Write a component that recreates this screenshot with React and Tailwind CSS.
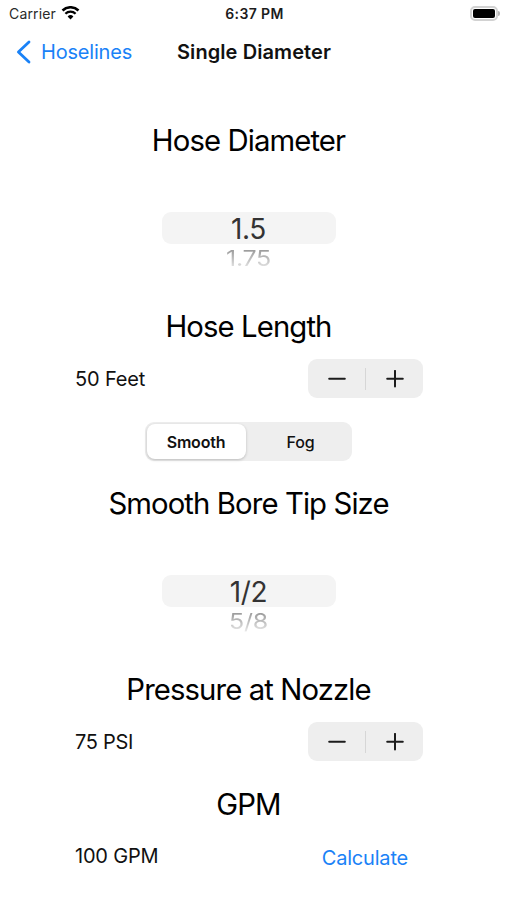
import React, { useState } from 'react';

const DIAMETERS = ['1.5', '1.75', '2.5'];
const TIP_SIZES = ['1/2', '5/8', '3/4'];

const StatusBar = () => (
  <div className="flex h-7 items-center justify-between pl-[9px] pr-[7px] text-[14px] leading-none">
    <div className="flex flex-1 items-center gap-[5px]">
      <span className="tracking-[0.15px] text-[#2a2a2a]">Carrier</span>
      <svg width="19" height="14" viewBox="0 0 18 14" fill="none" stroke="#000" className="mb-[2px]">
        <path d="M1 4.5 A11.4 11.4 0 0 1 17 4.5" strokeWidth="2.5" />
        <path d="M3.9 7.8 A7.3 7.3 0 0 1 14.1 7.8" strokeWidth="2.3" />
        <path d="M9 13.4 L6.1 10.4 A4.2 4.2 0 0 1 11.9 10.4 Z" fill="#000" stroke="none" />
      </svg>
    </div>
    <span className="font-semibold tracking-[0.4px] text-[#1c1c1c]">6:37 PM</span>
    <div className="flex flex-1 items-center justify-end pb-[2px]">
      <div className="h-[15px] w-[28px] rounded-[5px] border-2 border-[#d2d2d2] p-px">
        <div className="h-full w-full rounded-[2px] bg-black"></div>
      </div>
      <div className="h-[5px] w-[2px] rounded-r-full bg-[#b5b5b5]"></div>
    </div>
  </div>
);

const NavBar = () => (
  <div className="flex h-[50px] items-center pb-[2px] pl-4 text-[20px]">
    <button className="flex items-center gap-[9px] text-[#1a82f7]">
      <svg width="16" height="24" viewBox="0 0 16 24" fill="none" stroke="currentColor" strokeWidth="2.8" strokeLinecap="round" strokeLinejoin="round">
        <path d="M13 2 L2.4 12 L13 22" />
      </svg>
      <span className="tracking-[-0.2px]">Hoselines</span>
    </button>
    <h1 className="ml-[45px] font-semibold tracking-[0.08px] text-[#111]">Single Diameter</h1>
  </div>
);

const Heading = ({ children }) => (
  <h2 className="h-10 pt-px text-center text-[29.3px] leading-10 tracking-[-0.9px] text-black">{children}</h2>
);

const WheelPicker = ({ options }) => {
  const [selected, setSelected] = useState(0);
  const next = options[selected + 1];

  return (
    <div className="flex h-[146px] flex-col items-center pt-[52px]">
      <div className="flex h-8 w-[174px] items-center justify-center rounded-[9px] bg-[#f4f4f4] pt-px text-[28px] leading-none tracking-[-0.3px] text-[#333]">
        {options[selected]}
      </div>
      {next && (
        <button
          onClick={() => setSelected(selected + 1)}
          className="h-[28px] origin-center scale-y-[0.85] bg-linear-to-b from-[#8c8c8c] to-[#eeeeee] bg-clip-text text-[25px] leading-[28px] tracking-[-0.3px] text-transparent"
        >
          {next}
        </button>
      )}
    </div>
  );
};

const Stepper = ({ onDecrement, onIncrement }) => (
  <div className="flex h-[39px] w-[115px] items-center rounded-[9px] bg-[#eeeeee] text-[#1c1c1c]">
    <button onClick={onDecrement} className="flex flex-1 justify-center">
      <svg width="18" height="18" viewBox="0 0 18 18" stroke="currentColor" strokeWidth="2" strokeLinecap="round">
        <path d="M1.2 8.7 H16.8" />
      </svg>
    </button>
    <div className="h-[22px] w-px bg-[#d6d6d6]"></div>
    <button onClick={onIncrement} className="flex flex-1 justify-center">
      <svg width="18" height="18" viewBox="0 0 18 18" stroke="currentColor" strokeWidth="2" strokeLinecap="round">
        <path d="M1.2 8.7 H16.8 M9 0.9 V16.5" />
      </svg>
    </button>
  </div>
);

const App = () => {
  const [length, setLength] = useState(50);
  const [pressure, setPressure] = useState(75);
  const [nozzle, setNozzle] = useState('Smooth');
  const [gpm, setGpm] = useState(100);

  return (
    <div className="h-[900px] w-full overflow-hidden bg-white font-['Inter',sans-serif]">
      <StatusBar />
      <NavBar />

      <div className="ml-[74px] w-[349px] pt-[42px] text-[20px] text-[#111]">
        <Heading>Hose Diameter</Heading>
        <WheelPicker options={DIAMETERS} />

        {/* Hose length */}
        <Heading>Hose Length</Heading>
        <div className="mt-[13px] flex items-center justify-between">
          <span className="pl-px tracking-[-0.15px]">{length} Feet</span>
          <Stepper
            onDecrement={() => setLength(Math.max(0, length - 50))}
            onIncrement={() => setLength(length + 50)}
          />
        </div>

        {/* Nozzle type */}
        <div className="mx-auto mt-6 flex h-[39px] w-[207px] rounded-[9px] bg-[#eeeeee] p-[2px] text-[16px]">
          {['Smooth', 'Fog'].map((type) => (
            <button
              key={type}
              onClick={() => setNozzle(type)}
              className={
                nozzle === type
                  ? 'w-[99px] rounded-[8px] bg-white pr-px font-semibold tracking-[-0.2px] shadow-[0_1px_3px_rgba(0,0,0,0.22)]'
                  : 'flex-1 pl-[5px] font-medium tracking-[-0.2px]'
              }
            >
              {type}
            </button>
          ))}
        </div>

        <div className="mt-[22px]">
          <Heading>Smooth Bore Tip Size</Heading>
          <WheelPicker options={TIP_SIZES} />
        </div>

        {/* Nozzle pressure */}
        <Heading>Pressure at Nozzle</Heading>
        <div className="mt-[13px] flex items-center justify-between">
          <span className="pl-px tracking-[-0.3px]">{pressure} PSI</span>
          <Stepper
            onDecrement={() => setPressure(Math.max(0, pressure - 5))}
            onIncrement={() => setPressure(pressure + 5)}
          />
        </div>

        {/* Result */}
        <div className="mt-[23px]">
          <Heading>GPM</Heading>
        </div>
        <div className="mt-[17px] flex items-start justify-between pr-[15px]">
          <span className="pl-px tracking-[-0.2px]">{gpm} GPM</span>
          <button onClick={() => setGpm(100)} className="pt-[2px] tracking-[-0.2px] text-[#1a82f7]">
            Calculate
          </button>
        </div>
      </div>
    </div>
  );
};

export default App;
